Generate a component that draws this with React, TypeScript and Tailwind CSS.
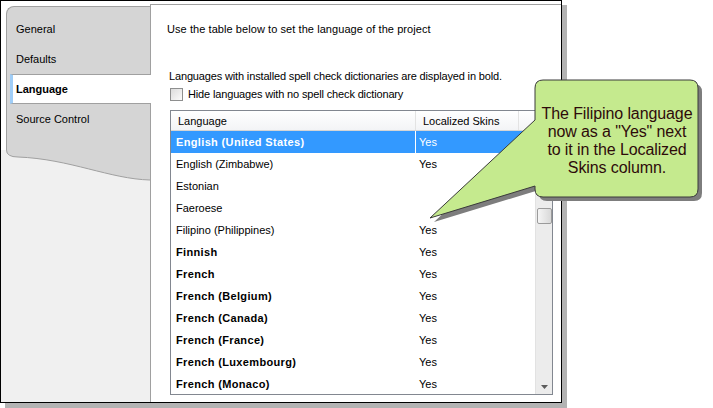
import React from 'react';

const rows = [
  { name: 'English (United States)', skins: 'Yes', bold: true, selected: true },
  { name: 'English (Zimbabwe)', skins: 'Yes', bold: false },
  { name: 'Estonian', skins: '', bold: false },
  { name: 'Faeroese', skins: '', bold: false },
  { name: 'Filipino (Philippines)', skins: 'Yes', bold: false },
  { name: 'Finnish', skins: 'Yes', bold: true },
  { name: 'French', skins: 'Yes', bold: true },
  { name: 'French (Belgium)', skins: 'Yes', bold: true },
  { name: 'French (Canada)', skins: 'Yes', bold: true },
  { name: 'French (France)', skins: 'Yes', bold: true },
  { name: 'French (Luxembourg)', skins: 'Yes', bold: true },
  { name: 'French (Monaco)', skins: 'Yes', bold: true },
];

const tabs = ['General', 'Defaults', 'Language', 'Source Control'];

function Sidebar() {
  return (
    <div className="w-[149px] shrink-0 flex flex-col relative z-10">
      {/* tab strip */}
      <div className="pl-[5px] pt-[5px] bg-white">
        <div className="h-[144px] bg-[#d5d5d5] border-l border-t border-[#a0a0a0] rounded-tl-[8px] pt-[7px]">
          {tabs.map(t =>
            t === 'Language' ? (
              <div
                key={t}
                className="h-[30px] ml-[3px] mr-[-1px] flex items-center bg-white border-y border-[#a0a0a0] border-l-[3px] border-l-[#9fcdf7] pl-[3px] font-bold"
              >
                {t}
              </div>
            ) : (
              <div key={t} className="h-[30px] flex items-center pl-[9px]">
                {t}
              </div>
            )
          )}
        </div>
      </div>
      <div className="flex-1 bg-[#f0f0f0] pl-[5px]">
        <svg width="144" height="32" viewBox="0 0 144 32" className="block">
          <path d="M0 0 H144 V30 C104 29 64 9 12 7 Q0 7 0 0 Z" fill="#d5d5d5" />
          <path d="M0.5 0 Q0.5 7 12 7 C64 9 104 29 144 30" fill="none" stroke="#a0a0a0" />
        </svg>
      </div>
    </div>
  );
}

function LanguageTable() {
  return (
    <div className="ml-[3px] mt-[9px] w-[383px] h-[285px] border border-[#828790] flex overflow-hidden bg-white">
      <div className="w-[364px] flex flex-col">
        {/* header */}
        <div className="h-[20px] shrink-0 flex bg-gradient-to-b from-white to-[#f3f4f6] border-b border-[#d5d5d5]">
          <div className="w-[245px] pl-[7px] flex items-center border-r border-[#e3e3e3]">Language</div>
          <div className="w-[103px] pl-[7px] flex items-center border-r border-[#e3e3e3]">Localized Skins</div>
          <div className="flex-1" />
        </div>
        {rows.map(r => (
          <div
            key={r.name}
            className={`h-[22px] shrink-0 flex ${r.selected ? 'bg-[#3399ff] text-white' : 'text-black'}`}
          >
            <div
              className={`w-[245px] pl-[5px] flex items-center ${r.bold ? 'font-bold tracking-[0.35px]' : ''} ${
                r.selected ? 'border-r border-white' : ''
              }`}
            >
              {r.name}
            </div>
            <div className="w-[103px] pl-[3px] flex items-center">{r.skins}</div>
          </div>
        ))}
      </div>
      {/* scrollbar */}
      <div className="w-[17px] shrink-0 bg-[#ececec] border-l border-[#e2e2e2] flex flex-col items-center">
        <div className="h-[97px] shrink-0" />
        <div className="w-[15px] h-[16px] rounded-[2px] border border-[#9b9b9b] bg-gradient-to-r from-[#f5f5f5] to-[#d9d9d9]" />
        <div className="flex-1" />
        <svg width="7" height="4" viewBox="0 0 7 4" className="mb-[5px]">
          <path d="M0 0 H7 L3.5 4 Z" fill="#5c5c5c" />
        </svg>
      </div>
    </div>
  );
}

function Callout() {
  const shape =
    'M543 80 H690 Q698 80 698 88 V189 Q698 197 690 197 H543 Q535 197 535 189 V186 L430 218 L535 120 V88 Q535 80 543 80 Z';
  return (
    <>
      <svg
        className="absolute left-[420px] top-[75px] pointer-events-none"
        width="290"
        height="150"
        viewBox="420 75 290 150"
      >
        <path d={shape} fill="#7d7d7d" transform="translate(4 4)" />
        <path d={shape} fill="#c5ea8e" stroke="#3a3a3a" strokeWidth="1" />
      </svg>
      <div className="absolute left-[536px] top-[81px] w-[162px] h-[116px] flex items-center justify-center text-center pt-[3px] font-['Liberation_Sans',Arial,sans-serif] text-[16px] leading-[18px] text-[#2e0a0a] tracking-[-0.1px]">
        The Filipino language
        <br />
        now as a "Yes" next
        <br />
        to it in the Localized
        <br />
        Skins column.
      </div>
    </>
  );
}

export default function App() {
  return (
    <div className="relative w-[713px] h-[408px] bg-white overflow-hidden font-['Liberation_Sans',Arial,sans-serif] text-[11px] text-black">
      <div className="w-[562px] h-[403px] border border-black bg-white flex shadow-[5px_5px_0_0_#b3b3b3]">
        <Sidebar />
        <div className="flex-1 mt-[3px] bg-white border-l border-t border-[#a0a0a0] pl-[16px] pt-[17px] flex flex-col leading-[14px]">
          <p className="tracking-[0.07px]">Use the table below to set the language of the project</p>
          <p className="mt-[33px] ml-[2px] tracking-[-0.15px]">
            Languages with installed spell check dictionaries are displayed in bold.
          </p>
          <div className="mt-[4px] ml-[3px] flex items-center gap-[5px]">
            <span className="w-[13px] h-[13px] border border-[#8e8f8f] bg-gradient-to-br from-[#dcdcdc] to-[#fbfbfb]" />
            <span className="tracking-[-0.15px]">Hide languages with no spell check dictionary</span>
          </div>
          <LanguageTable />
        </div>
      </div>
      <Callout />
    </div>
  );
}
